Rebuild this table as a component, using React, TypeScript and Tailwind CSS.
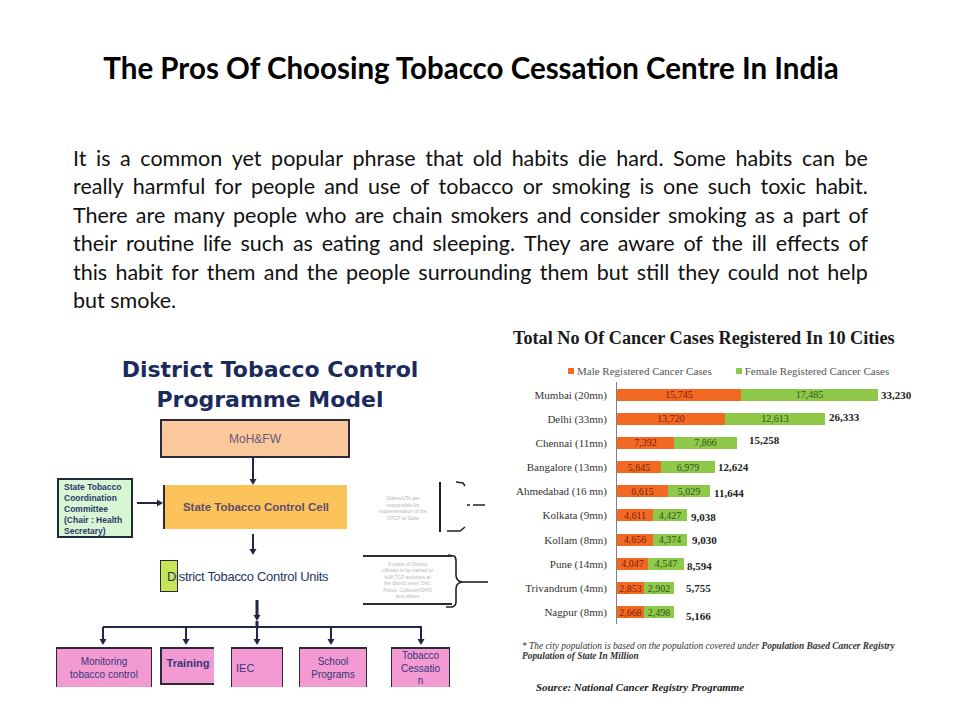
import React from "react";

const paragraph = [
  "It is a common yet popular phrase that old habits die hard. Some habits can be",
  "really harmful for people and use of tobacco or smoking is one such toxic habit.",
  "There are many people who are chain smokers and consider smoking as a part of",
  "their routine life such as eating and sleeping. They are aware of the ill effects of",
  "this habit for them and the people surrounding them but still they could not help",
];

type Row = { city: string; m: string; f: string; mw: number; fw: number; t: string; gap: number; dy: number };

const rows: Row[] = [
  { city: "Mumbai (20mn)", m: "15,745", f: "17,485", mw: 124, fw: 137, t: "33,230", gap: 3, dy: 0 },
  { city: "Delhi (33mn)", m: "13,720", f: "12,613", mw: 108, fw: 100, t: "26,333", gap: 4, dy: -2 },
  { city: "Chennai (11mn)", m: "7,392", f: "7,866", mw: 57, fw: 63, t: "15,258", gap: 12, dy: -3 },
  { city: "Bangalore (13mn)", m: "5,645", f: "6,979", mw: 44, fw: 54, t: "12,624", gap: 3, dy: 0 },
  { city: "Ahmedabad (16 mn)", m: "6,615", f: "5,029", mw: 51, fw: 42, t: "11,644", gap: 4, dy: 2 },
  { city: "Kolkata (9mn)", m: "4,611", f: "4,427", mw: 36, fw: 34, t: "9,038", gap: 4, dy: 2 },
  { city: "Kollam (8mn)", m: "4,656", f: "4,374", mw: 36, fw: 34, t: "9,030", gap: 5, dy: 0 },
  { city: "Pune (14mn)", m: "4,047", f: "4,547", mw: 31, fw: 36, t: "8,594", gap: 3, dy: 2 },
  { city: "Trivandrum (4mn)", m: "2,853", f: "2,902", mw: 27, fw: 30, t: "5,755", gap: 12, dy: 0 },
  { city: "Nagpur (8mn)", m: "2,668", f: "2,498", mw: 27, fw: 30, t: "5,166", gap: 12, dy: 4 },
];

const NAVY = "#1f2747";

function VArrow({ x, y1, y2, w = 2 }: { x: number; y1: number; y2: number; w?: number }) {
  return (
    <g>
      <line x1={x} y1={y1} x2={x} y2={y2 - 5} stroke={NAVY} strokeWidth={w} />
      <polygon points={`${x - 3.5},${y2 - 6} ${x + 3.5},${y2 - 6} ${x},${y2}`} fill={NAVY} />
    </g>
  );
}

function DiagramLines() {
  return (
    <svg className="absolute inset-0" width={440} height={285} viewBox="0 0 440 285">
      <VArrow x={203} y1={43} y2={70} />
      <line x1={87} y1={88} x2={108} y2={88} stroke={NAVY} strokeWidth={2} />
      <polygon points="107,84.5 107,91.5 113,88" fill={NAVY} />
      <VArrow x={203} y1={119} y2={140} />
      <VArrow x={207} y1={185} y2={206} w={3} />
      <line x1={53} y1={212} x2={372} y2={212} stroke={NAVY} strokeWidth={2} />
      <line x1={207} y1={206} x2={207} y2={212} stroke={NAVY} strokeWidth={3} />
      {[53, 136, 207, 281, 371].map((x) => (
        <VArrow key={x} x={x} y1={212} y2={230} w={2} />
      ))}
      {/* bracket one */}
      <line x1={390} y1={67} x2={390} y2={117} stroke="#222" strokeWidth={2} />
      <path d="M406 67 L413 68 L415 71" stroke="#222" strokeWidth={1.5} fill="none" />
      <line x1={417} y1={90} x2={420} y2={90} stroke="#222" strokeWidth={1.5} />
      <line x1={423} y1={90} x2={435} y2={90} stroke="#222" strokeWidth={1.5} />
      <path d="M397 116 L410 116 L415 112" stroke="#222" strokeWidth={1.5} fill="none" />
      {/* bracket two */}
      <path
        d="M398 140 L404 141 Q406 142 406 146 L406 160 Q406 166 412 167 Q406 168 406 174 L406 187 Q406 191 402 192 L396 192"
        stroke="#222"
        strokeWidth={1.6}
        fill="none"
      />
      <line x1={412} y1={167} x2={438} y2={167} stroke="#222" strokeWidth={1.6} />
    </svg>
  );
}

function Diagram() {
  return (
    <div className="ml-[50px] w-[440px] pt-[33px] font-['DejaVu_Sans',sans-serif]">
      <div className="text-center text-[22px] font-bold leading-[30px] text-[#1b2a5c]">
        <div>District Tobacco Control</div>
        <div>Programme Model</div>
      </div>
      <div className="relative h-[285px] w-[440px] font-['Liberation_Sans',sans-serif]">
        <DiagramLines />
        <div className="absolute left-[110px] top-[4px] flex h-[39px] w-[190px] items-center justify-center border-2 border-[#2a2a3a] bg-[#fbc99c] text-[12px] text-[#6a5878]">
          MoH&amp;FW
        </div>
        <div className="absolute left-[113px] top-[70px] flex h-[44px] w-[184px] items-center justify-center border-l-2 border-[#2a2a3a] bg-[#fcc35a] text-[11.5px] font-bold text-[#5c4d6e]">
          State Tobacco Control Cell
        </div>
        <div className="absolute left-[7px] top-[63px] h-[60px] w-[76px] border-2 border-[#1f2a3a] bg-[#d8f5d4] px-[5px] pt-[2px] text-[8.5px] font-bold leading-[11px] text-[#2a3a6a]">
          <div>State Tobacco</div>
          <div>Coordination</div>
          <div>Committee</div>
          <div>(Chair : Health</div>
          <div>Secretary)</div>
        </div>
        <div className="absolute left-[323px] top-[80px] w-[60px] text-center text-[5px] leading-[6.5px] text-[#b8b8b8]">
          <div>States/UTs are</div>
          <div>responsible for</div>
          <div>implementation of the</div>
          <div>NTCP at State</div>
        </div>
        <div className="absolute left-[110px] top-[145px] h-[32px] w-[18px] border-[1.5px] border-[#2a2a3a] bg-[#c5e657]" />
        <div className="absolute left-[117px] top-[153px] text-[13px] leading-[18px] tracking-[-0.3px] text-[#2a3560]">
          District Tobacco Control Units
        </div>
        <div className="absolute left-[313px] top-[140px] flex h-[50px] w-[89px] flex-col items-center justify-center border-y-2 border-[#2a2a3a] bg-white text-center text-[5px] leading-[6.5px] text-[#b8b8b8]">
          <div>A cadre of District</div>
          <div>officials to be trained to</div>
          <div>fulfil TCP activities at</div>
          <div>the district level; Dist.</div>
          <div>Police, Collector/DHO</div>
          <div>and others</div>
        </div>
        <div className="absolute left-[6px] top-[232px] flex h-[40px] w-[96px] flex-col items-center justify-center border-x-[1.5px] border-t-2 border-[#2a2a3a] bg-[#f39ad2] text-center text-[10px] leading-[13px] text-[#35357a]">
          <div>Monitoring</div>
          <div>tobacco control</div>
        </div>
        <div className="absolute left-[110px] top-[232px] flex h-[38px] w-[54px] items-start justify-center border-y-2 border-l-2 border-[#2a2a3a] bg-[#f39ad2] pt-[6px] text-[11px] font-bold text-[#35357a]">
          Training
        </div>
        <div className="absolute left-[181px] top-[232px] flex h-[40px] w-[52px] items-center border-x-[1.5px] border-t-2 border-[#2a2a3a] bg-[#f39ad2] pl-[4px] text-[11px] text-[#35357a]">
          IEC
        </div>
        <div className="absolute left-[249px] top-[232px] flex h-[40px] w-[68px] flex-col items-center justify-center border-x-[1.5px] border-t-2 border-[#2a2a3a] bg-[#f39ad2] text-center text-[10px] leading-[13px] text-[#35357a]">
          <div>School</div>
          <div>Programs</div>
        </div>
        <div className="absolute left-[341px] top-[232px] flex h-[40px] w-[59px] flex-col items-center border-x-[1.5px] border-t-2 border-[#2a2a3a] bg-[#f39ad2] pt-[1px] text-center text-[10px] leading-[12.5px] text-[#35357a]">
          <div>Tobacco</div>
          <div>Cessatio</div>
          <div>n</div>
        </div>
      </div>
    </div>
  );
}

function Chart() {
  return (
    <div className="ml-[15px] w-[430px] pt-[6px] font-['Liberation_Serif',serif]">
      <div className="pl-[8px] text-[18.2px] font-bold leading-[20px] text-[#1a1a1a]">
        Total No Of Cancer Cases Registered In 10 Cities
      </div>
      <div className="mt-[16px] flex h-[14px] items-center pl-[63px] text-[11px] text-[#555]">
        <span className="mr-[3px] inline-block h-[6px] w-[6px] bg-[#f26a21]" />
        <span>Male Registered Cancer Cases</span>
        <span className="ml-[24px] mr-[3px] inline-block h-[6px] w-[6px] bg-[#8fc94a]" />
        <span>Female Registered Cancer Cases</span>
      </div>
      <div className="mt-[4px] flex flex-col">
        {rows.map((r) => (
          <div key={r.city} className="flex h-[24.2px] items-center">
            <div className="w-[102px] whitespace-nowrap text-right text-[11px] leading-[12px] text-[#333]">{r.city}</div>
            <div className="ml-[9px] flex h-full items-center border-l border-[#808080]">
              <div
                className="flex h-[12px] items-center justify-center bg-[#f26a21] text-[10px] text-[#7a1a10]"
                style={{ width: r.mw }}
              >
                {r.m}
              </div>
              <div
                className="flex h-[12px] items-center justify-center bg-[#8fc94a] text-[10px] text-[#2f5518]"
                style={{ width: r.fw }}
              >
                {r.f}
              </div>
              <div
                className="text-[11px] font-bold leading-[12px] text-[#222]"
                style={{ marginLeft: r.gap, transform: `translateY(${r.dy}px)` }}
              >
                {r.t}
              </div>
            </div>
          </div>
        ))}
      </div>
      <div className="mt-[17px] pl-[17px] text-[9.4px] italic leading-[10px] text-[#333]">
        <div className="whitespace-nowrap">
          * The city population is based on the population covered under{" "}
          <span className="font-bold">Population Based Cancer Registry</span>
        </div>
        <div className="font-bold">Population of State In Million</div>
      </div>
      <div className="mt-[20px] pl-[31px] text-[10.9px] font-bold italic leading-[12px] text-[#222]">
        Source: National Cancer Registry Programme
      </div>
    </div>
  );
}

export default function App() {
  return (
    <div className="relative h-[720px] w-[960px] overflow-hidden bg-white font-['Lato',sans-serif] text-[#111]">
      <h1 className="pr-[18px] pt-[50px] text-center text-[29.5px] font-bold leading-[36px] text-black">
        The Pros Of Choosing Tobacco Cessation Centre In India
      </h1>
      <div className="ml-[73px] mt-[58px] w-[795px] text-[21.5px] leading-[28.4px]">
        {paragraph.map((line, i) => (
          <div key={i} className="flex justify-between">
            {line.split(" ").map((w, j) => (
              <span key={j}>{w}</span>
            ))}
          </div>
        ))}
        <div>but smoke.</div>
      </div>
      <div className="mt-[8px] flex">
        <Diagram />
        <Chart />
      </div>
    </div>
  );
}
